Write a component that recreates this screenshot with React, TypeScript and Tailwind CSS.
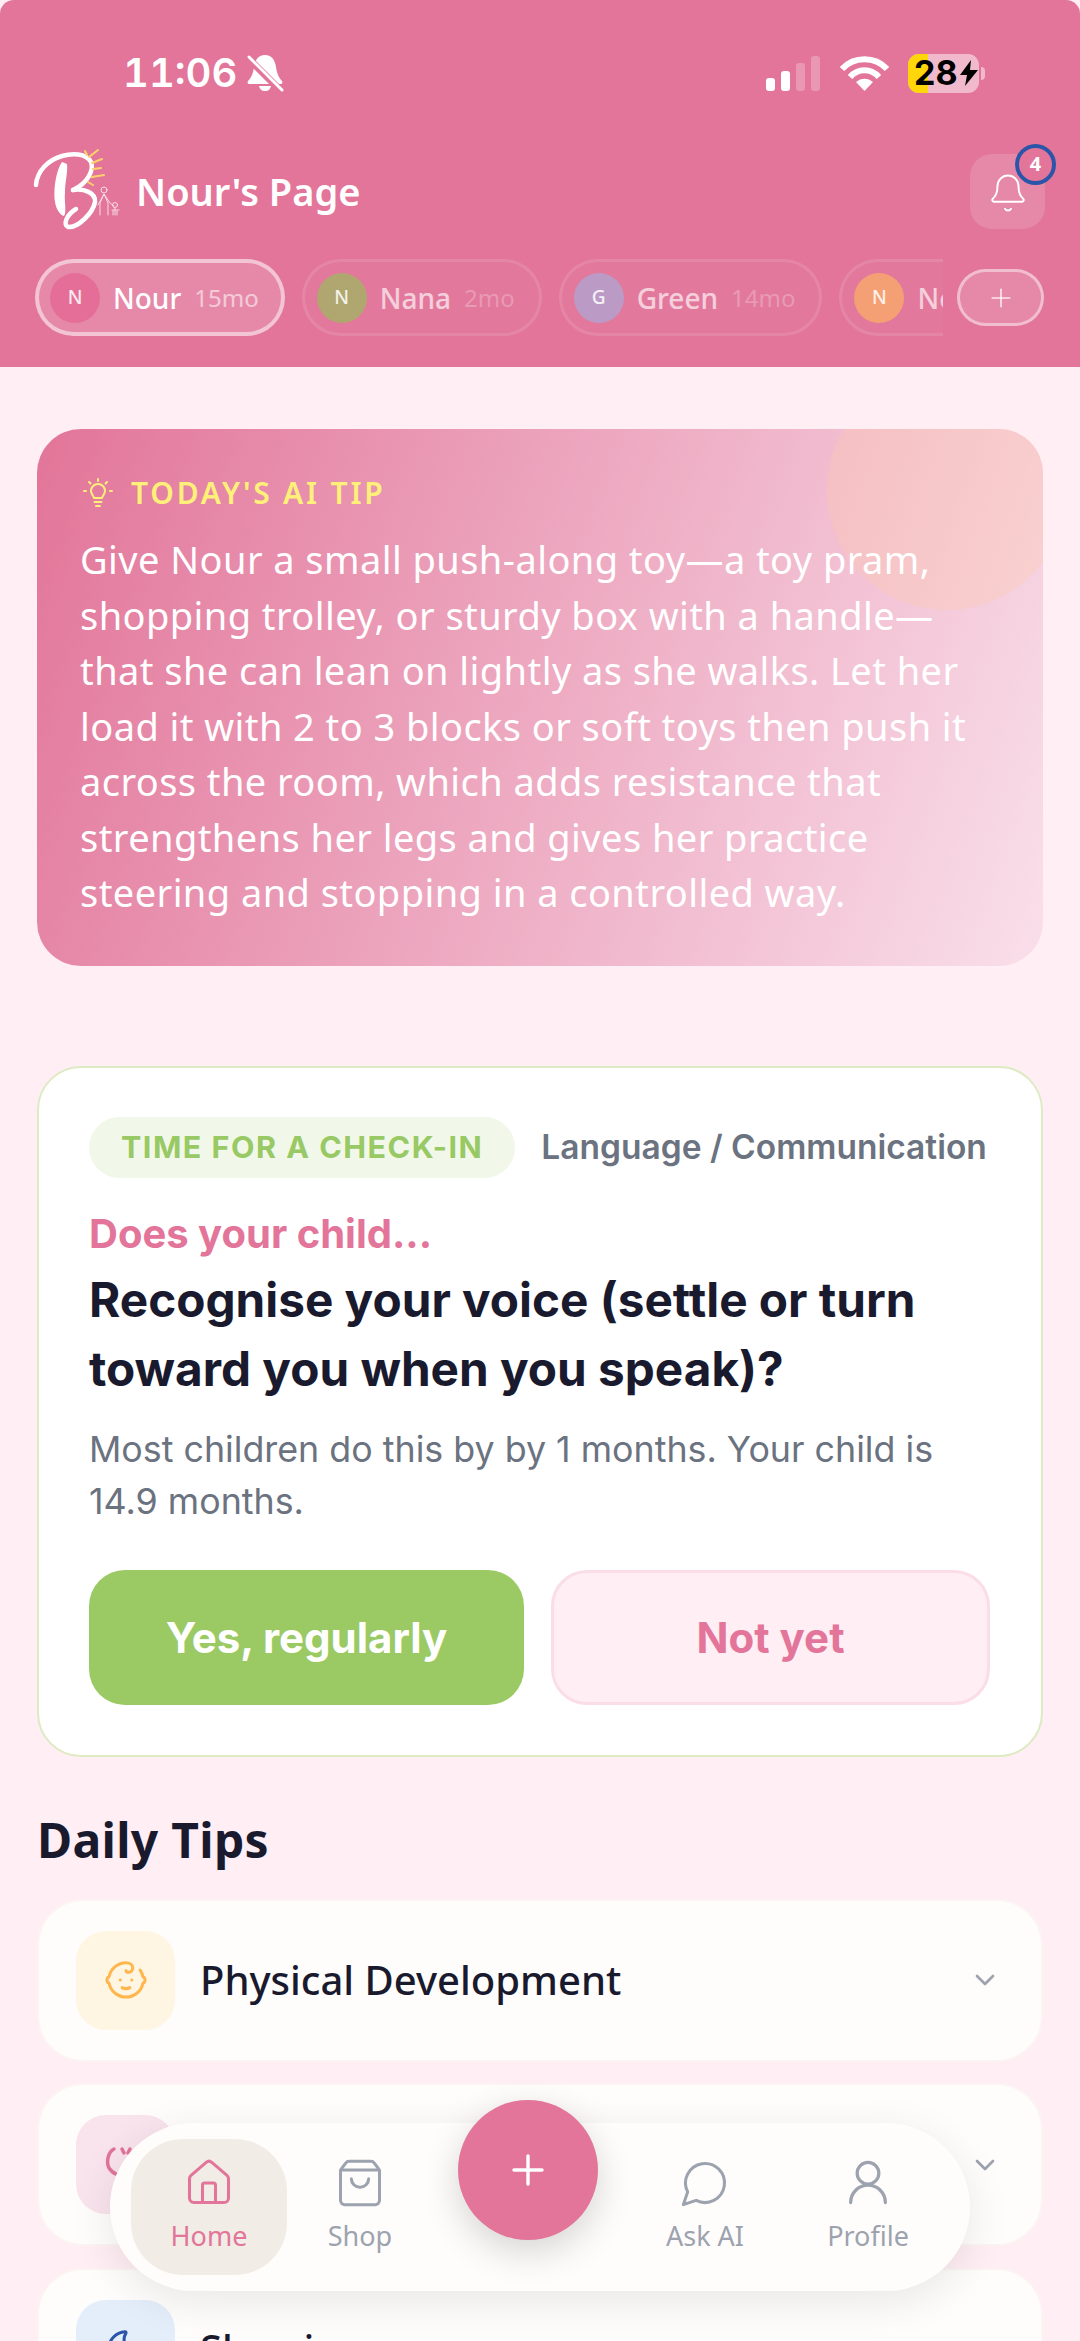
import React from 'react';
import { Baby, Bell, ChevronDown, House, Moon, Plus, ShoppingBag } from 'lucide-react';

const CHILDREN = [
  { initial: 'N', name: 'Nour', age: '15mo', color: 'bg-[#E56E98]', active: true },
  { initial: 'N', name: 'Nana', age: '2mo', color: 'bg-[#B0A66F]', active: false },
  { initial: 'G', name: 'Green', age: '14mo', color: 'bg-[#BB9AC6]', active: false },
  { initial: 'N', name: 'Noor', age: '9mo', color: 'bg-[#F4A074]', active: false },
];

const Logo = () => (
  <svg width="92" height="92" viewBox="32 148 92 92" fill="none" strokeLinecap="round" className="shrink-0">
    <path d="M36 188C37 174 48 163 62 159C72 156 86 156 91 165C94 173 88 186 73 193" stroke="#fff" strokeWidth="4.500" />
    <path d="M73 193C84 191 96 196 95 205C93 216 78 231 68 230C63 228 66 218 76 212" stroke="#fff" strokeWidth="4.500" />
    <path d="M62 165C57 172 53 190 55 205C56 212 60 218 64 219C67 215 64 205 65 195C65 185 68 175 67 167Z" fill="#fff" />
    <g stroke="#FFD36B" strokeWidth="2">
      <path d="M89 160L98 153M85 154L87 158M92 166L102 162M93 172L101 171M92 180L104 178M88 185L93 188" />
    </g>
    <g stroke="#fff" strokeWidth="1" opacity="0.75">
      <circle cx="104" cy="193" r="3" />
      <path d="M100 218V206L104 197L108 206V218M98 208L104 197L110 206L114 209" />
      <circle cx="115" cy="208" r="2.500" />
      <path d="M115 211V218M112 213H119M113 218V214M117 218V214" />
    </g>
  </svg>
);

const SilentBell = () => (
  <svg width="38" height="38" viewBox="0 0 38 38" className="shrink-0">
    <path d="M19 1C12 1 9 6 8 13C7 20 5 24 2 27C1 29 2 30 4 30H34C36 30 37 29 36 27C33 24 31 20 30 13C29 6 26 1 19 1Z" fill="#fff" />
    <path d="M13 32C14 36 16 37 19 37C22 37 24 36 25 32Z" fill="#fff" />
    <path d="M2 4L34 36" stroke="#E27599" strokeWidth="7" />
    <path d="M3 3L36 36" stroke="#fff" strokeWidth="3" strokeLinecap="round" />
  </svg>
);

const Signal = () => (
  <svg width="55" height="35" viewBox="0 0 55 35" fill="#fff">
    <rect x="0" y="22" width="9" height="13" rx="3" />
    <rect x="15" y="15" width="9" height="20" rx="3" />
    <rect x="30" y="7" width="9" height="28" rx="3" opacity="0.25" />
    <rect x="45" y="0" width="9" height="35" rx="3" opacity="0.25" />
  </svg>
);

const Wifi = () => (
  <svg width="49" height="36" viewBox="0 0 49 36" fill="none" stroke="#fff" strokeWidth="6">
    <path d="M2 14C14 1 35 1 47 14" />
    <path d="M10 22C18 13 31 13 39 22" />
    <path d="M16 27C21 22.500 28 22.500 33 27L24.500 36Z" fill="#fff" stroke="none" />
  </svg>
);

const Battery = () => (
  <div className="flex items-center gap-[2px]">
    <div className="relative h-[39px] w-[71px] overflow-hidden rounded-[11px] bg-white/50">
      <div className="absolute inset-y-0 left-0 w-[20px] bg-[#FFD60A]" />
      <div className="relative flex h-full items-center pl-[6px] text-[34px] leading-none font-bold text-black font-['Inter',sans-serif]">
        28
        <svg width="18" height="26" viewBox="0 0 18 26" fill="#000" className="ml-[2px] shrink-0">
          <path d="M11 0L0 15H7L5 26L18 10H10Z" />
        </svg>
      </div>
    </div>
    <div className="h-[13px] w-[4px] rounded-r-full bg-white/50" />
  </div>
);

const StatusBar = () => (
  <div className="mb-[7px] flex h-[146px] items-center justify-between pr-[95px] pl-[123px]">
    <div className="flex items-center gap-[9px] text-[40px] leading-none font-semibold text-white tabular-nums font-['Inter',sans-serif]">
      11:06
      <SilentBell />
    </div>
    <div className="flex items-center gap-[19px]">
      <Signal />
      <Wifi />
      <Battery />
    </div>
  </div>
);

const ChildChip = ({ initial, name, age, color, active }: (typeof CHILDREN)[number]) => (
  <div
    className={`flex h-[77px] shrink-0 items-center gap-[13px] rounded-full ${
      active ? 'border-[4px] border-white/50 bg-white/15 pr-[22px] pl-[11px]' : 'border-[3px] border-white/10 bg-white/[0.03] pr-[24px] pl-[12px]'
    }`}
  >
    <div className={`flex size-[50px] shrink-0 items-center justify-center rounded-full text-[19px] font-medium text-white/85 ${color}`}>
      {initial}
    </div>
    <span className={`text-[28px] font-medium ${active ? 'text-white' : 'text-white/65'}`}>{name}</span>
    <span className={`text-[24px] ${active ? 'text-white/55' : 'text-white/25'}`}>{age}</span>
  </div>
);

const Header = () => (
  <header className="h-[367px] shrink-0 rounded-t-[14px] bg-[#E27599]">
    <StatusBar />
    <div className="px-[35px]">
      <div className="flex h-[76px] items-center justify-between">
        <div className="flex items-center gap-[14px]">
          <div className="-mr-[2px] -ml-[3px]">
            <Logo />
          </div>
          <span className="text-[38px] font-semibold text-white">Nour's Page</span>
        </div>
        <div className="relative flex h-[75px] w-[75px] items-center justify-center rounded-[22px] bg-white/15">
          <Bell size={42} strokeWidth={1.1} className="mt-[4px] text-white" />
          <div className="absolute -top-[10px] -right-[11px] flex size-[41px] items-center justify-center rounded-full border-[4px] border-[#2B55A8] bg-[#E27599] text-[20px] font-bold text-white">
            4
          </div>
        </div>
      </div>
      <div className="mt-[30px] flex items-center gap-[14px]">
        <div className="flex w-[908px] gap-[17px] overflow-hidden">
          {CHILDREN.map((child) => (
            <ChildChip key={child.name} {...child} />
          ))}
        </div>
        <div className="flex h-[57px] w-[87px] shrink-0 items-center justify-center rounded-full border-[3px] border-white/45 bg-white/15">
          <Plus size={30} strokeWidth={1.3} className="text-white/80" />
        </div>
      </div>
    </div>
  </header>
);

const TipBulb = () => (
  <svg width="30" height="30" viewBox="0 0 30 30" fill="none" stroke="#FFF07A" strokeWidth="2" strokeLinecap="round" strokeLinejoin="round" className="shrink-0">
    <path d="M11 20C10 17 8 16 8 13A7 7 0 0 1 22 13C22 16 20 17 19 20Z" />
    <path d="M11.500 24H18.500M13 28H17" />
    <path d="M15 1V3M3 13H1M29 13H27M6 4L7.500 5.500M24 4L22.500 5.500" />
  </svg>
);

const AiTip = () => (
  <section className="relative overflow-hidden rounded-[44px] bg-[linear-gradient(110deg,#E27599_0%,#F9DFEA_100%)] pt-[44px] pr-[50px] pb-[45px] pl-[43px]">
    <div className="absolute -top-[59px] -right-[24px] size-[240px] rounded-full bg-[#FFC9A8]/30" />
    <div className="relative">
      <div className="flex h-[40px] items-center gap-[18px] pl-[3px]">
        <TipBulb />
        <span className="text-[30px] leading-none font-semibold tracking-[2.8px] text-[#FFF07A]">TODAY'S AI TIP</span>
      </div>
      <p className="mt-[19px] text-[38px] leading-[55.5px] tracking-[0.43px] text-white">
        Give Nour a small push-along toy—a toy pram, shopping trolley, or sturdy box with a handle—that she can lean on lightly as she walks. Let her load it with 2 to 3 blocks or soft toys then push it across the room, which adds resistance that strengthens her legs and gives her practice steering and stopping in a controlled way.
      </p>
    </div>
  </section>
);

const CheckIn = () => (
  <section className="mt-[100px] rounded-[44px] border-[2px] border-[#DDEBC4] bg-white px-[50px] pt-[49px] pb-[50px] font-['Inter',sans-serif]">
    <div className="flex items-center gap-[26px] whitespace-nowrap">
      <span className="flex h-[61px] items-center rounded-full bg-[#F1F8E9] px-[32px] text-[30.5px] font-bold tracking-[1.5px] text-[#98C965]">
        TIME FOR A CHECK-IN
      </span>
      <span className="text-[33.5px] font-semibold text-[#6B7280]">Language / Communication</span>
    </div>
    <p className="mt-[32px] text-[40px] leading-[48px] font-bold text-[#E27599]">Does your child...</p>
    <h2 className="mt-[8px] text-[47.7px] leading-[69px] font-bold text-[#1A1A2E]">
      Recognise your voice (settle or turn toward you when you speak)?
    </h2>
    <p className="mt-[19px] text-[35.8px] leading-[52px] text-[#6B7280]">
      Most children do this by by 1 months. Your child is 14.9 months.
    </p>
    <div className="mt-[43px] flex gap-[27px]">
      <button className="h-[135px] w-[435px] rounded-[36px] bg-[#9BCA64] text-[42px] font-bold text-white">Yes, regularly</button>
      <button className="h-[135px] w-[439px] rounded-[36px] border-[3px] border-[#FBDDE7] bg-[#FFEEF3] text-[42px] font-bold text-[#E27599]">
        Not yet
      </button>
    </div>
  </section>
);

const TipRow = ({ icon, tint, title }: { icon: React.ReactNode; tint: string; title: string }) => (
  <div className="flex h-[163px] shrink-0 items-center rounded-[46px] border-[2px] border-[#FCF3F3] bg-[#FFFDFB] pr-[40px] pl-[37px]">
    <div className={`flex size-[99px] shrink-0 items-center justify-center rounded-[30px] ${tint}`}>{icon}</div>
    <span className="ml-[25px] flex-1 text-[40px] font-medium text-[#1A1A2E]">{title}</span>
    <ChevronDown size={32} strokeWidth={2} className="text-[#9CA3AF]" />
  </div>
);

const PartIcon = () => (
  <svg width="46" height="46" viewBox="0 0 46 46" fill="none" stroke="#E27599" strokeWidth="3.500" strokeLinecap="round">
    <path d="M11 7C5 10 3 20 6 26C8 29 10 31 13 32" />
    <path d="M19 7L21 11" />
    <path d="M35 7C41 10 43 20 40 26C38 29 36 31 33 32" />
    <path d="M27 7L25 11" />
  </svg>
);

const DailyTips = () => (
  <section>
    <h2 className="mt-[52px] text-[48px] leading-[62px] font-bold tracking-[0.3px] text-[#1A1A2E]">Daily Tips</h2>
    <div className="mt-[28px] flex flex-col gap-[21.5px]">
      <TipRow title="Physical Development" tint="bg-[#FFF5E3]" icon={<Baby size={46} strokeWidth={1.6} className="text-[#FFB74D]" />} />
      <TipRow title="Emotional Wellbeing" tint="bg-[#F9E3EC]" icon={<PartIcon />} />
      <TipRow title="Sleeping" tint="bg-[#E4EEFB]" icon={<Moon size={46} strokeWidth={1.6} className="text-[#2B55A8]" />} />
    </div>
  </section>
);

const NavItem = ({ icon, label, width, active }: { icon: React.ReactNode; label: string; width: string; active?: boolean }) => (
  <div
    className={`flex h-[136px] flex-col items-center rounded-[52px] pt-[18px] ${width} ${
      active ? 'bg-[#F1ECE6] text-[#E27599]' : 'text-[#9CA3AF]'
    }`}
  >
    {icon}
    <span className="mt-[9px] text-[27px] leading-[36px]">{label}</span>
  </div>
);

const ChatIcon = () => (
  <svg width="52" height="52" viewBox="0 0 24 24" fill="none" stroke="currentColor" strokeWidth="1.4" strokeLinejoin="round">
    <path d="M7.900 20A9 9 0 1 0 4 16.100L2 22Z" />
  </svg>
);

const ProfileIcon = () => (
  <svg width="52" height="52" viewBox="0 0 24 24" fill="none" stroke="currentColor" strokeWidth="1.500" strokeLinecap="round">
    <circle cx="12" cy="7.500" r="5" />
    <path d="M4 21a8 8 0 0 1 16 0" />
  </svg>
);

const BottomNav = () => (
  <nav className="absolute top-[2123px] left-[110px] flex h-[168px] w-[860px] items-center rounded-[84px] bg-[#FFFDFB] pl-[21px] shadow-[0_10px_44px_rgba(0,0,0,0.09)]">
    <NavItem active width="w-[156px]" label="Home" icon={<House size={52} strokeWidth={1.4} />} />
    <NavItem width="w-[146px]" label="Shop" icon={<ShoppingBag size={52} strokeWidth={1.4} />} />
    <div className="w-[190px]" />
    <NavItem width="w-[164px]" label="Ask AI" icon={<ChatIcon />} />
    <NavItem width="w-[162px]" label="Profile" icon={<ProfileIcon />} />
    <div className="absolute -top-[23px] left-[348px] flex size-[140px] items-center justify-center rounded-full bg-[#E27599] shadow-[0_12px_36px_rgba(0,0,0,0.16)]">
      <Plus size={48} strokeWidth={1.7} className="text-white" />
    </div>
  </nav>
);

export default function App() {
  return (
    <div className="relative flex h-[2341px] w-full flex-col overflow-hidden bg-[#FFEEF3] font-['Noto_Sans',sans-serif]">
      <Header />
      <main className="shrink-0 px-[37px] pt-[62px]">
        <AiTip />
        <CheckIn />
        <DailyTips />
      </main>
      <BottomNav />
    </div>
  );
}
